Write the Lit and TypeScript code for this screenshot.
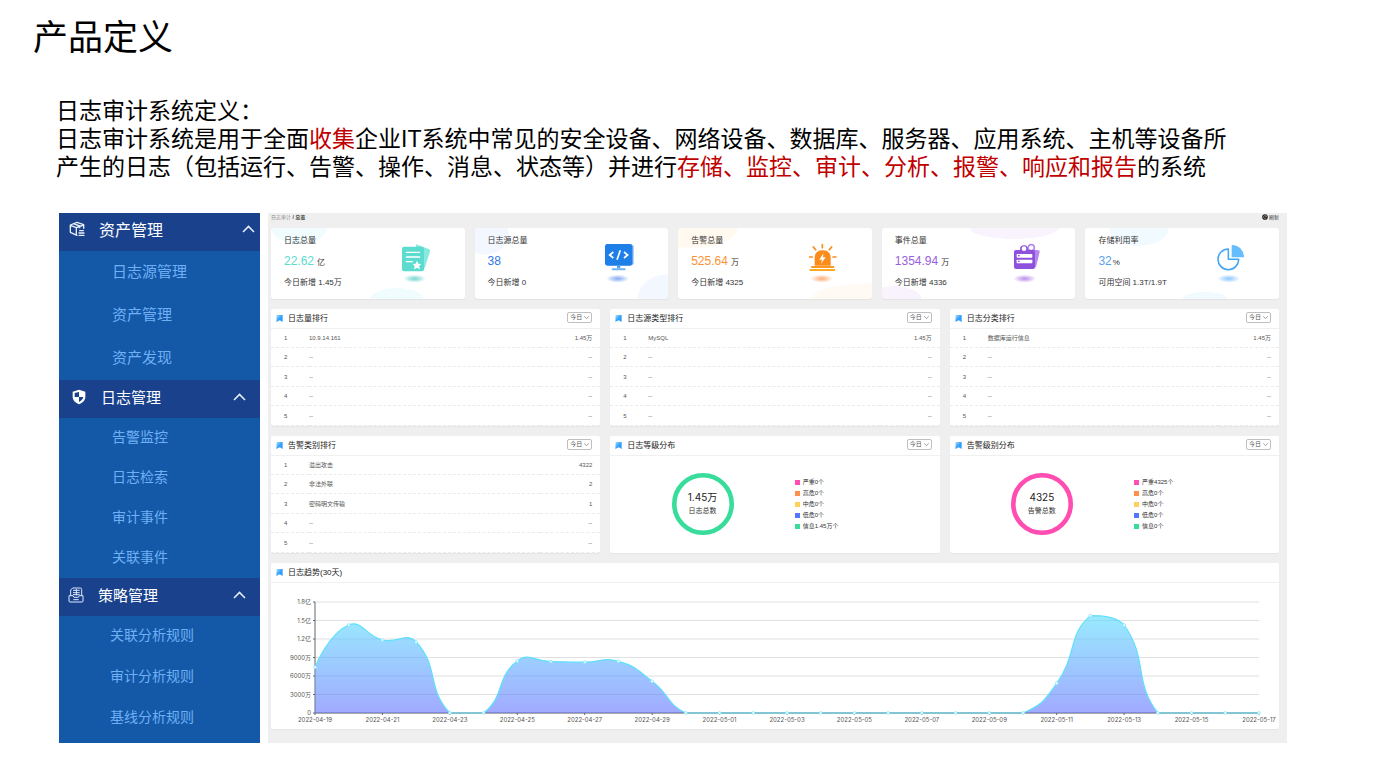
import { LitElement, html, svg, css } from "lit";
import { customElement, property } from "lit/decorators.js";

const CJK = css`"Liberation Sans", "Noto Sans CJK SC", sans-serif`;

const reset = css`
  *, *::before, *::after { box-sizing: border-box; }
  h1, h2, p, ul { margin: 0; padding: 0; font-weight: 400; font-size: inherit; }
  ul { list-style: none; }
  a { color: inherit; text-decoration: none; }
  button { font: inherit; color: inherit; background: none; border: 0; padding: 0; margin: 0; cursor: pointer; }
  svg { display: block; }
`;

/* ---------- sidebar ---------- */

interface MenuGroup { key: string; title: string; items: string[]; }

const MENU: MenuGroup[] = [
  { key: "asset", title: "资产管理", items: ["日志源管理", "资产管理", "资产发现"] },
  { key: "log", title: "日志管理", items: ["告警监控", "日志检索", "审计事件", "关联事件"] },
  { key: "policy", title: "策略管理", items: ["关联分析规则", "审计分析规则", "基线分析规则"] },
];

const menuIcon = (key: string) => {
  if (key === "asset") {
    return html`<svg width="16" height="16" viewBox="0 0 48 48" fill="none" stroke="#e8f0fc" stroke-width="4" stroke-linejoin="round" stroke-linecap="round">
      <path d="M24 43 L4 34 V12 L24 4 L44 11 V22 M4 13 L22 20 L44 12 M22 20 V42 M13 8 L32 15 V20"/>
      <path d="M32 29 H43 M30 36 H45 M30 43 H45"/>
    </svg>`;
  }
  if (key === "log") {
    return html`<svg width="14" height="16" viewBox="0 0 42 48">
      <path d="M21 2 L40 8 V24 C40 34 31 42 21 46 C11 42 2 34 2 24 V8 Z" fill="#fff"/>
      <path d="M21 9 V24 H8 V12 Z M21 24 H34 C33 31 27 36 21 39 Z" fill="#1a428c"/>
    </svg>`;
  }
  return html`<svg width="16" height="16" viewBox="0 0 48 48" fill="none" stroke="#dbe8fb" stroke-width="3" stroke-linejoin="round">
    <path d="M8 26 V9 L14 3 H37 Q41 3 41 7 V26"/>
    <path d="M3 26 H15 L18 31 H31 L34 26 H45 V42 Q45 45 42 45 H6 Q3 45 3 42 Z"/>
    <path d="M15 10 H35 M15 17 H35 M15 23 H35 M25 6 V25 M16 38 H32"/>
  </svg>`;
};

@customElement("side-menu")
class SideMenu extends LitElement {
  static styles = [reset, css`
    :host { display: block; background: #1459a8; color: #6fb0f5; font-family: "Noto Sans CJK SC", sans-serif; }
    .head { display: flex; align-items: center; width: 100%; height: 38px; background: #1a428c; color: #fff;
      font-size: 15px; line-height: 20px; padding: 0 14px 4px 10px; }
    .icon { width: 20px; display: flex; justify-content: center; margin-right: 12px; }
    .label { flex: 1; text-align: left; }
    .item { display: block; padding: 0 0 4px 53px; font-size: 14px; line-height: 36px; }
    .asset .head { font-size: 16px; padding: 0 5px 6px 8px; }
    .asset .item { font-size: 15px; line-height: 39px; }
    .policy .head { padding-left: 7px; }
    .policy .item { padding-left: 51px; line-height: 37px; }
    .policy .list { padding-bottom: 4px; }
  `];
  render() {
    return html`<nav>${MENU.map(g => html`<section class=${g.key}>
      <button class="head" type="button" aria-expanded="true">
        <span class="icon">${menuIcon(g.key)}</span>
        <span class="label">${g.title}</span>
        <svg width="13" height="8" viewBox="0 0 13 8" fill="none" stroke="#e6eefb" stroke-width="1.5"><path d="M1 7 L6.5 1.4 L12 7"/></svg>
      </button>
      <ul class="list">${g.items.map(i => html`<li><a class="item" href="#">${i}</a></li>`)}</ul>
    </section>`)}</nav>`;
  }
}

/* ---------- summary cards ---------- */

interface Stat { key: string; label: string; value: string; unit: string; sub: string; shadow: string; }

const STATS: Stat[] = [
  { key: "total", label: "日志总量", value: "22.62", unit: "亿", sub: "今日新增 1.45万", shadow: "#5fd0c8" },
  { key: "source", label: "日志源总量", value: "38", unit: "", sub: "今日新增 0", shadow: "#6f9cf0" },
  { key: "alarm", label: "告警总量", value: "525.64", unit: "万", sub: "今日新增 4325", shadow: "#fba060" },
  { key: "event", label: "事件总量", value: "1354.94", unit: "万", sub: "今日新增 4336", shadow: "#b07ae8" },
  { key: "disk", label: "存储利用率", value: "32", unit: "%", sub: "可用空间 1.3T/1.9T", shadow: "#79bdfb" },
];

const statArt = (key: string) => {
  switch (key) {
    case "total":
      return svg`
        <path d="M42 4 L80 18 Q86 20 84 26 L68 76 L40 70 Z" fill="#8ae9df"/>
        <rect x="0" y="11" width="66" height="74" rx="6" fill="#5cdccf"/>
        <path d="M13 28 H53 M13 42 H53 M13 56 H31" stroke="#fff" stroke-width="4" stroke-linecap="round"/>
        <path d="M45 53 L49 62 L58 63 L51 69 L54 79 L45 74 L36 79 L38 69 L32 63 L41 62 Z" fill="#fff"/>`;
    case "source":
      return svg`
        <rect x="6" y="5" width="80" height="62" rx="7" fill="#8ab8f7"/>
        <rect x="0" y="3" width="82" height="65" rx="7" fill="#1f7fe8"/>
        <path d="M36 68 H46 V76 H36 Z" fill="#5b9ff0"/>
        <rect x="20" y="76" width="42" height="6" rx="3" fill="#6fb2f8"/>
        <path d="M25 27 L14 36 L25 45 M57 27 L68 36 L57 45 M46 22 L36 50" fill="none" stroke="#fff" stroke-width="5"/>`;
    case "alarm":
      return svg`
        <path d="M17 68 V45 Q17 22 41 22 Q65 22 65 45 V68 Z" fill="#fb8c1c"/>
        <path d="M43 31 L31 50 H39 L36 62 L50 43 H42 Z" fill="#fff"/>
        <path d="M9 72 H73" stroke="#fb961f" stroke-width="6" stroke-linecap="round"/>
        <path d="M4 81 H76" stroke="#fbab22" stroke-width="6" stroke-linecap="round"/>
        <path d="M40 5 V14 M13 12 L20 20 M68 12 L61 20 M1 42 H10 M72 42 H81" stroke="#fb8c1c" stroke-width="5" stroke-linecap="round"/>`;
    case "event":
      return svg`
        <path d="M50 18 L80 22 Q84 23 83 27 L72 72 L60 76 Z" fill="#b689ef"/>
        <circle cx="58" cy="14" r="9" fill="none" stroke="#b689ef" stroke-width="5"/>
        <rect x="6" y="21" width="63" height="57" rx="6" fill="#8f50de"/>
        <circle cx="36" cy="19" r="12" fill="#8f50de"/>
        <circle cx="36" cy="17" r="7" fill="#fff"/>
        <circle cx="57" cy="14" r="6" fill="#fff"/>
        <rect x="14" y="33" width="47" height="11" rx="2" fill="#fff"/>
        <rect x="14" y="50" width="47" height="11" rx="2" fill="#fff"/>
        <path d="M18 38 H23 M18 55 H23" stroke="#8f50de" stroke-width="4"/>`;
    default:
      return svg`
        <path d="M37 18 A31 31 0 1 0 68 49 H37 Z" fill="none" stroke="#3fa5f6" stroke-width="4.5" stroke-linejoin="round"/>
        <path d="M47 8 Q47 6 49 6 A36 36 0 0 1 84 41 Q84 43 82 43 H47 Z" fill="#66bdfb"/>`;
  }
};

@customElement("stat-card")
class StatCard extends LitElement {
  @property({ attribute: false }) stat!: Stat;
  static styles = [reset, css`
    :host { display: block; font-family: ${CJK}; }
    .card { display: flex; justify-content: space-between; height: 71px; padding: 7px 33px 0 13px; border-radius: 3px;
      background-color: #fff; box-shadow: 0 1px 1px #0000000d; color: #333; font-size: 8px; line-height: 12px; }
    .value { display: flex; align-items: baseline; gap: 3px; margin: 4px 0 6px; height: 20px; line-height: 20px; }
    .num { font-size: 12px; }
    .art { margin-top: 8px; flex: none; }
    .total { background-image: radial-gradient(28px 16px at 28px 0, #f0fcfd 97%, #f0fcfd00), radial-gradient(27px 11px at 126px 100%, #f0fcfd 97%, #f0fcfd00); }
    .total .num { color: #5bdccd; }
    .source { background-image: radial-gradient(24px 22px at 10px 5px, #f3f7ff 97%, #f3f7ff00), radial-gradient(31px 25px at 100% 100%, #f3f7ff 97%, #f3f7ff00); }
    .source .num { color: #2d78e6; }
    .alarm { background-image: radial-gradient(46px 20px at 14px 0, #fff9ef 97%, #fff9ef00), radial-gradient(62px 16px at 100% 100%, #fffaf3 97%, #fffaf300); }
    .alarm .num { color: #fb9333; }
    .event { background-image: radial-gradient(45px 11px at 132px 0, #f8f3fd 97%, #f8f3fd00), radial-gradient(28px 13px at 12px 100%, #f8f3fd 97%, #f8f3fd00); }
    .event .num { color: #9a5fe0; }
    .disk { background-image: radial-gradient(30px 18px at 54px 0, #f1fafe 97%, #f1fafe00), radial-gradient(23px 7px at 120px 100%, #f1fafe 97%, #f1fafe00); }
    .disk .num { color: #5aa2ec; }
    .disk .value { gap: 1px; }
  `];
  render() {
    const s = this.stat;
    return html`<article class="card ${s.key}">
      <div>
        <h2>${s.label}</h2>
        <p class="value"><span class="num">${s.value}</span><span>${s.unit}</span></p>
        <p>${s.sub}</p>
      </div>
      <svg class="art" width="30" height="42" viewBox="0 0 90 126" aria-hidden="true">
        <defs><radialGradient id="glow"><stop offset="0" stop-color=${s.shadow} stop-opacity=".85"/><stop offset=".5" stop-color=${s.shadow} stop-opacity=".45"/><stop offset="1" stop-color=${s.shadow} stop-opacity="0"/></radialGradient></defs>
        <ellipse cx="38" cy="107" rx="34" ry="12" fill="url(#glow)"/>
        ${statArt(s.key)}
      </svg>
    </article>`;
  }
}

/* ---------- panels ---------- */

@customElement("data-panel")
class DataPanel extends LitElement {
  @property() heading = "";
  @property({ type: Boolean }) range = false;
  static styles = [reset, css`
    :host { display: flex; flex-direction: column; background: #fff; border-radius: 2px; box-shadow: 0 1px 1px #0000000a;
      font-family: ${CJK}; color: #333; }
    .head { display: flex; align-items: center; height: 20px; padding: 0 8px 0 5px; border-bottom: 1px solid #f0f0f0; }
    .mark { margin-right: 5px; }
    .title { flex: 1; font-size: 8px; line-height: 12px; color: #222; }
    .range { display: grid; align-items: center; }
    .range > * { grid-area: 1 / 1; }
    .select { appearance: none; width: 25px; height: 11px; padding: 0 0 0 2px; margin: 0 0 2px; border: 1px solid #bfbfbf; border-radius: 2px;
      background: #fff; color: #555; font: 6px/9px ${CJK}; }
    .caret { justify-self: end; margin: 0 3px 2px 0; pointer-events: none; }
    .body { flex: 1; display: flex; flex-direction: column; }
  `];
  render() {
    return html`
      <header class="head">
        <svg class="mark" width="7" height="7" viewBox="0 0 21 21" aria-hidden="true">
          <defs><linearGradient id="m" x1="0" y1="0" x2="1" y2="1"><stop offset=".1" stop-color="#8fd3ff"/><stop offset=".55" stop-color="#2f9dfb"/></linearGradient></defs>
          <path d="M2 0 H20 V21 L11 16 L1 21 Z" fill="url(#m)"/>
        </svg>
        <h2 class="title">${this.heading}</h2>
        ${this.range ? html`<div class="range">
          <select class="select" aria-label="${this.heading}时间范围"><option>今日</option></select>
          <svg class="caret" width="5" height="3" viewBox="0 0 15 9" fill="none" stroke="#888" stroke-width="2.4"><path d="M1 1 L7.5 8 L14 1"/></svg>
        </div>` : ""}
      </header>
      <div class="body"><slot></slot></div>`;
  }
}

type Row = [string, string];
const EMPTY: Row = ["--", "--"];

@customElement("rank-table")
class RankTable extends LitElement {
  @property({ attribute: false }) rows: Row[] = [];
  static styles = [reset, css`
    :host { display: block; font-family: ${CJK}; }
    .table { width: 100%; height: 97px; border-collapse: collapse; table-layout: fixed; font-size: 6px; line-height: 8px; color: #555; }
    .cell { padding: 0; border-bottom: 1px dashed #ebebeb; text-align: left; }
    .no { width: 38px; padding-left: 13px; }
    .count { width: 60px; padding-right: 8px; text-align: right; }
  `];
  render() {
    return html`<table class="table"><tbody>${this.rows.map(([name, count], i) => html`<tr>
      <td class="cell no">${i + 1}</td><td class="cell">${name}</td><td class="cell count">${count}</td>
    </tr>`)}</tbody></table>`;
  }
}

const LEVELS: [string, string][] = [["严重", "#ff4db2"], ["高危", "#ff8f4d"], ["中危", "#ffd257"], ["低危", "#5577ff"], ["信息", "#38dd9b"]];

@customElement("level-ring")
class LevelRing extends LitElement {
  @property() color = "";
  @property() total = "";
  @property() caption = "";
  @property({ attribute: false }) counts: string[] = [];
  static styles = [reset, css`
    :host { flex: 1; display: grid; grid-template-columns: 56% 1fr; align-items: center; font-family: Inter, "Noto Sans CJK SC", sans-serif; color: #333;
      padding-bottom: 1px; }
    .ring { display: grid; place-items: center; }
    .ring > * { grid-area: 1 / 1; }
    .text { text-align: center; font-size: 7px; line-height: 14px; padding-bottom: 1px; }
    .total { font-size: 10px; color: #222; }
    .legend { font: 6px/11px ${CJK}; }
    .entry { display: flex; align-items: center; gap: 3px; }
  `];
  render() {
    return html`
      <div class="ring">
        <svg width="62" height="62" viewBox="0 0 62 62" aria-hidden="true"><circle cx="31" cy="31" r="28.7" fill="none" stroke=${this.color} stroke-width="4.6"/></svg>
        <div class="text"><p class="total">${this.total}</p><p>${this.caption}</p></div>
      </div>
      <ul class="legend">${LEVELS.map(([name, fill], i) => html`<li class="entry">
        <svg width="5" height="5"><rect width="5" height="5" fill=${fill}/></svg><span>${name}${this.counts[i]}个</span>
      </li>`)}</ul>`;
  }
}

/* ---------- 30 day trend ---------- */

const LEFT = 44, RIGHT = 988, TOP = 19, BASE = 130;
/* Daily volume, in units of ten thousand. */
const DAILY = [7420, 14270, 11840, 11510, 0, 0, 8430, 8330, 8250, 8380, 5140, 0, 0, 0, 0, 0, 0, 0, 0, 0, 0, 0, 4810, 15790, 14270, 0, 0, 0, 0];
const Y_TICKS = ["0", "3000万", "6000万", "9000万", "1.2亿", "1.5亿", "1.8亿"];

const dayLabel = (i: number) => new Date(Date.UTC(2022, 3, 19 + i)).toISOString().slice(0, 10);

const pts = DAILY.map((v, i) => [
  LEFT + (i * (RIGHT - LEFT)) / (DAILY.length - 1),
  BASE - (v * (BASE - TOP)) / 18000,
]);

/* Cubic spline whose handles stay inside the bounds of the whole series. */
function smoothPath(p: number[][], k = 0.5) {
  const ys = p.map(q => q[1]);
  const lo = Math.min(...ys), hi = Math.max(...ys);
  const clamp = (y: number) => Math.max(lo, Math.min(hi, y));
  let d = `M${p[0][0]} ${p[0][1]}`;
  let c0 = p[0];
  for (let i = 1; i < p.length; i++) {
    const cur = p[i], prev = p[i - 1], next = p[i + 1];
    let c1 = cur, out = cur;
    if (next) {
      const lp = Math.hypot(cur[0] - prev[0], cur[1] - prev[1]);
      const ln = Math.hypot(next[0] - cur[0], next[1] - cur[1]);
      const r = ln / (ln + lp);
      const vx = next[0] - prev[0], vy = next[1] - prev[1];
      c1 = [cur[0] - vx * k * (1 - r), clamp(cur[1] - vy * k * (1 - r))];
      out = [cur[0] + vx * k * r, clamp(cur[1] + vy * k * r)];
    }
    d += ` C${c0[0]} ${c0[1]} ${c1[0]} ${c1[1]} ${cur[0]} ${cur[1]}`;
    c0 = out;
  }
  return d;
}

@customElement("trend-chart")
class TrendChart extends LitElement {
  static styles = [reset, css`
    :host { display: block; }
    .chart { width: 100%; height: auto; overflow: visible; }
    .tick { font: 6px Inter, "Noto Sans CJK SC", sans-serif; fill: #555; }
    .mid { text-anchor: middle; }
    .end { text-anchor: end; }
    .grid { stroke: #e0e0e0; }
    .axis { stroke: #666; }
  `];
  render() {
    const line = smoothPath(pts);
    const step = (BASE - TOP) / 6;
    return html`<svg class="chart" viewBox="0 0 1008 146" role="img" aria-label="日志趋势">
      <defs><linearGradient id="area" x1="0" y1="0" x2="0" y2="1"><stop offset="0" stop-color="#55dcff"/><stop offset="1" stop-color="#6272ff"/></linearGradient></defs>
      ${Y_TICKS.map((t, i) => {
        const y = BASE - i * step;
        return svg`<line class="grid" x1=${LEFT} x2=${RIGHT} y1=${y} y2=${y}/>
          <line class="axis" x1=${LEFT - 2} x2=${LEFT} y1=${y} y2=${y}/>
          <text class="tick end" x=${LEFT - 4} y=${y + 2}>${t}</text>`;
      })}
      <path class="axis" fill="none" d="M${LEFT} ${TOP} V${BASE} H${RIGHT}"/>
      ${pts.map(([x], i) => i % 2 ? "" : svg`<line class="axis" x1=${x} x2=${x} y1=${BASE} y2=${BASE + 2}/>
        <text class="tick mid" x=${x} y=${BASE + 9}>${dayLabel(i)}</text>`)}
      <path d="${line} V${BASE} H${LEFT} Z" fill="url(#area)" fill-opacity=".6"/>
      <path d=${line} fill="none" stroke="#5fe0fb" stroke-width="1.2"/>
      ${pts.map(([x, y]) => svg`<circle cx=${x} cy=${y} r="1.4" fill="#fff" stroke="#7fe6fb" stroke-width=".8"/>`)}
    </svg>`;
  }
}

/* ---------- page ---------- */

@customElement("app-root")
class AppRoot extends LitElement {
  static styles = [reset, css`
    :host { display: block; min-height: 100vh; background: #fff; color: #000; font-family: ${CJK}; }
    .title { padding: 14px 33px 0; font-size: 35px; line-height: 48px; }
    .intro { padding: 35px 144px 0 56px; font-size: 23px; line-height: 28px; }
    .red { color: #c00000; }
    .screen { display: grid; grid-template-columns: 201px 1fr; gap: 8px; margin: 32px 98px 34px 59px; }
    .board { display: flex; flex-direction: column; gap: 10px; background: #efefef; padding: 0 8px 14px 3px; font-family: ${CJK}; }
    .bar { display: flex; justify-content: space-between; height: 5px; font-size: 5px; line-height: 8px; color: #333; }
    .crumb { color: #888; }
    .refresh { display: flex; align-items: center; gap: 1px; height: 8px; line-height: 8px; font-size: 5px; }
    .stats { display: grid; grid-template-columns: repeat(5, 1fr); gap: 10px; }
    .panels { display: grid; grid-template-columns: repeat(3, 1fr); gap: 10px; }
  `];
  render() {
    return html`
      <h1 class="title">产品定义</h1>
      <div class="intro">
        <p>日志审计系统定义：</p>
        <p>日志审计系统是用于全面<span class="red">收集</span>企业IT系统中常见的安全设备、网络设备、数据库、服务器、应用系统、主机等设备所产生的日志（包括运行、告警、操作、消息、状态等）并进行<span class="red">存储、监控、审计、分析、报警、响应和报告</span>的系统</p>
      </div>
      <div class="screen">
        <side-menu></side-menu>
        <main class="board">
          <div class="bar">
            <div><a class="crumb" href="#">日志审计</a> <b>/ 总览</b></div>
            <button class="refresh" type="button">
              <svg width="6" height="6" viewBox="0 0 18 18"><circle cx="9" cy="9" r="8.5" fill="#222"/><path d="M13 7 A4.5 4.5 0 1 0 13 11 M13 4 V8 H9" fill="none" stroke="#bbb" stroke-width="1.5"/></svg>刷新
            </button>
          </div>
          <div class="stats">${STATS.map(s => html`<stat-card .stat=${s}></stat-card>`)}</div>
          <div class="panels">
            <data-panel heading="日志量排行" range><rank-table .rows=${[["10.9.14.161", "1.45万"], EMPTY, EMPTY, EMPTY, EMPTY]}></rank-table></data-panel>
            <data-panel heading="日志源类型排行" range><rank-table .rows=${[["MySQL", "1.45万"], EMPTY, EMPTY, EMPTY, EMPTY]}></rank-table></data-panel>
            <data-panel heading="日志分类排行" range><rank-table .rows=${[["数据库运行信息", "1.45万"], EMPTY, EMPTY, EMPTY, EMPTY]}></rank-table></data-panel>
            <data-panel heading="告警类别排行" range><rank-table .rows=${[["溢出攻击", "4322"], ["非法外联", "2"], ["密码明文传输", "1"], EMPTY, EMPTY]}></rank-table></data-panel>
            <data-panel heading="日志等级分布" range><level-ring color="#38dd9b" total="1.45万" caption="日志总数" .counts=${["0", "0", "0", "0", "1.45万"]}></level-ring></data-panel>
            <data-panel heading="告警级别分布" range><level-ring color="#ff4db2" total="4325" caption="告警总数" .counts=${["4325", "0", "0", "0", "0"]}></level-ring></data-panel>
          </div>
          <data-panel heading="日志趋势(30天)"><trend-chart></trend-chart></data-panel>
        </main>
      </div>`;
  }
}
